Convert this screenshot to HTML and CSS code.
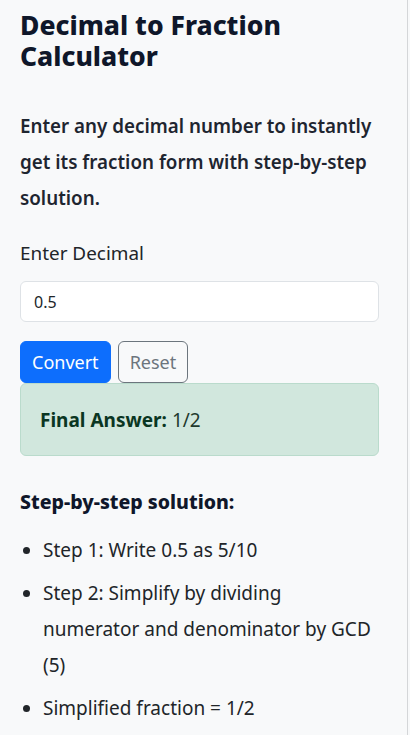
FILE: index.html
```html
<!DOCTYPE html>
<html lang="en">
<head>
<meta charset="utf-8">
<title>Decimal to Fraction Calculator</title>
<link rel="stylesheet" href="styles.css">
</head>
<body>
<main class="page">
  <h1 class="title">Decimal to Fraction Calculator</h1>
  <p class="intro">Enter any decimal number to instantly get its fraction form with step-by-step solution.</p>
  <label class="label" for="dec">Enter Decimal</label>
  <input class="input" id="dec" type="text" value="0.5">
  <div class="actions">
    <button class="btn btn-primary" type="button">Convert</button>
    <button class="btn btn-outline" type="button">Reset</button>
  </div>
  <div class="alert"><strong>Final Answer:</strong> 1/2</div>
  <h2 class="steps-title">Step-by-step solution:</h2>
  <ul class="steps">
    <li>Step 1: Write 0.5 as 5/10</li>
    <li>Step 2: Simplify by dividing numerator and denominator by GCD (5)</li>
    <li>Simplified fraction = 1/2</li>
  </ul>
</main>
</body>
</html>
```
FILE: styles.css
```css
html, body {
  margin: 0;
  padding: 0;
  height: 100%;
}
body {
  background: #f8f9fa;
  font-family: "Noto Sans", "Open Sans", sans-serif;
  color: #212529;
  overflow: hidden;
  border-right: 1px solid #d4d6d8;
  box-sizing: border-box;
  width: 408px;
}
.page {
  padding: 10px 0 0 20px;
  width: 359px;
}
.title {
  margin: 0;
  font-size: 26.5px;
  line-height: 31px;
  font-weight: 800;
  color: #0f172a;
}
.intro {
  margin: 36px 0 0;
  font-size: 18.8px;
  line-height: 36px;
  font-weight: 600;
  color: #1e2530;
}
.label {
  display: block;
  margin-top: 23px;
  font-size: 18.9px;
  line-height: 28px;
}
.input {
  display: block;
  box-sizing: border-box;
  width: 359px;
  height: 41px;
  margin-top: 14px;
  padding: 0 13px;
  border: 1px solid #dee2e6;
  border-radius: 6px;
  background: #fff;
  font-family: inherit;
  font-size: 16px;
  color: #212529;
}
.actions {
  display: flex;
  gap: 7px;
  margin-top: 19px;
}
.btn {
  height: 42px;
  padding: 0 11px;
  border-radius: 6px;
  font-family: inherit;
  font-size: 18px;
}
.btn-primary {
  background: #0d6efd;
  border: 1px solid #0d6efd;
  color: #fff;
}
.btn-outline {
  background: transparent;
  border: 1px solid #6c757d;
  color: #6c757d;
}
.alert {
  box-sizing: border-box;
  height: 73px;
  display: flex;
  align-items: center;
  gap: 5px;
  padding: 0 19px;
  background: #d1e7dd;
  border: 1px solid #badbcc;
  border-radius: 6px;
  color: #1f3a2d;
  font-size: 19px;
}
.alert strong {
  color: #0a3622;
}
.steps-title {
  margin: 32px 0 0;
  font-size: 19.5px;
  line-height: 28px;
  font-weight: 800;
  color: #0f172a;
}
.steps {
  margin: 16px 0 0;
  padding-left: 23px;
  font-size: 19px;
  line-height: 36px;
}
.steps li {
  margin-bottom: 7px;
}
```
